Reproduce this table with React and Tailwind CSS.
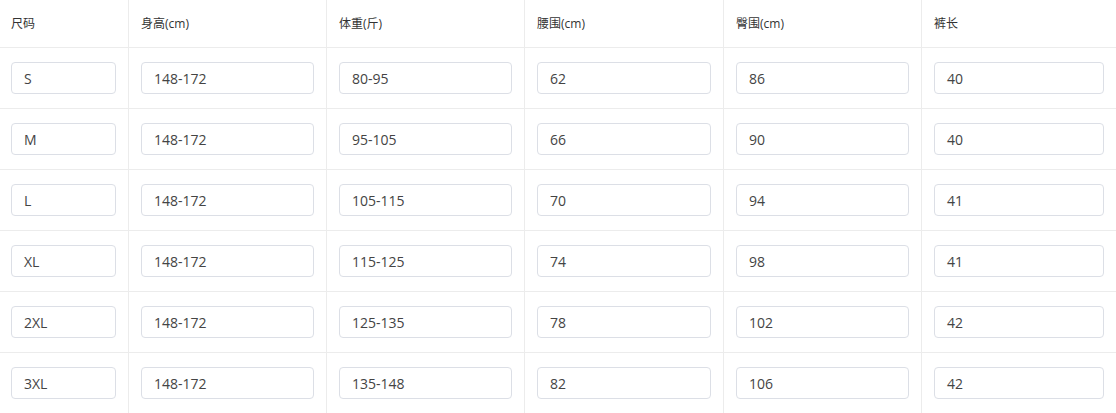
import React from "react";

const headers = ["尺码", "身高(cm)", "体重(斤)", "腰围(cm)", "臀围(cm)", "裤长"];
const rows = [
  ["S", "148-172", "80-95", "62", "86", "40"],
  ["M", "148-172", "95-105", "66", "90", "40"],
  ["L", "148-172", "105-115", "70", "94", "41"],
  ["XL", "148-172", "115-125", "74", "98", "41"],
  ["2XL", "148-172", "125-135", "78", "102", "42"],
  ["3XL", "148-172", "135-148", "82", "106", "42"],
];

export default function App() {
  return (
    <div
      className="w-[1116px] h-[413px] overflow-hidden bg-white text-[#333]"
      style={{ fontFamily: '"Open Sans", "Noto Sans CJK SC", sans-serif' }}
    >
      <div className="grid grid-cols-[129px_198px_198px_199px_198px_1fr]">
        {headers.map((h, i) => (
          <div
            key={h}
            className={`h-[48px] flex items-center pr-3 ${i === 0 ? "pl-[11px]" : "pl-3"} text-[12px] border-b border-[#ececec] ${i < 5 ? "border-r" : ""}`}
          >
            {h}
          </div>
        ))}
        {rows.map((r, ri) =>
          r.map((v, ci) => (
            <div
              key={ri + "-" + ci}
              className={`h-[61px] flex items-center pr-3 ${ci === 0 ? "pl-[11px]" : "pl-3"} border-b border-[#ececec] ${ci < 5 ? "border-r" : ""}`}
            >
              <div className="w-full h-[32px] flex items-center px-3 border border-[#dcdfe6] rounded-[4px] text-[14px] text-[#444]">
                {v}
              </div>
            </div>
          ))
        )}
      </div>
    </div>
  );
}
